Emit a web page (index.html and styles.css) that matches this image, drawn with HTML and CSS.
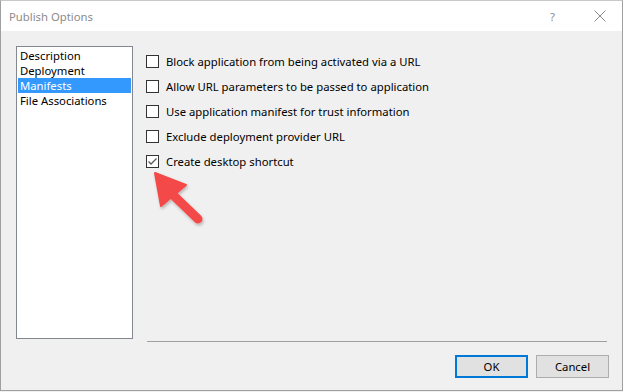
FILE: index.html
```html
<!DOCTYPE html>
<html>
<head>
<meta charset="utf-8">
<link rel="stylesheet" href="styles.css">
</head>
<body>
<div class="window">
  <div class="titlebar">
    <span class="title">Publish Options</span>
    <span class="help">?</span>
    <span class="close">
      <svg width="12" height="12" viewBox="0 0 12 12"><path d="M0.5 0.5 L11.5 11.5 M11.5 0.5 L0.5 11.5" stroke="#8a8a8a" stroke-width="1" fill="none"/></svg>
    </span>
  </div>
  <div class="content">
    <div class="main">
      <ul class="list">
        <li>Description</li>
        <li>Deployment</li>
        <li class="selected">Manifests</li>
        <li>File Associations</li>
      </ul>
      <div class="options">
        <div class="option"><span class="box"></span><span>Block application from being activated via a URL</span></div>
        <div class="option"><span class="box"></span><span>Allow URL parameters to be passed to application</span></div>
        <div class="option"><span class="box"></span><span>Use application manifest for trust information</span></div>
        <div class="option"><span class="box"></span><span>Exclude deployment provider URL</span></div>
        <div class="option"><span class="box checked"><svg width="11" height="11" viewBox="0 0 11 11"><path d="M1.5 5.5 L4 8 L9.5 2.5" stroke="#5a5a5a" stroke-width="1.3" fill="none"/></svg></span><span>Create desktop shortcut</span></div>
      </div>
    </div>
    <div class="separator"></div>
    <div class="buttons">
      <button class="btn default">OK</button>
      <button class="btn">Cancel</button>
    </div>
  </div>
  <svg class="arrow" width="60" height="60" viewBox="150 168 60 60">
    <defs>
      <filter id="sh" x="-30%" y="-30%" width="160%" height="160%">
        <feDropShadow dx="1" dy="2" stdDeviation="1.5" flood-color="#000" flood-opacity="0.25"/>
      </filter>
    </defs>
    <g filter="url(#sh)" fill="#f44848" stroke="#f44848">
      <path d="M155 173 L186 185 L161 206 Z" stroke-width="2" stroke-linejoin="round"/>
      <line x1="171" y1="193" x2="198" y2="219" stroke-width="9" stroke-linecap="round"/>
    </g>
  </svg>
</div>
</body>
</html>
```
FILE: styles.css
```css
* { box-sizing: border-box; }
html, body { margin: 0; padding: 0; }
body {
  width: 623px;
  height: 392px;
  background: #f0f0f0;
  font-family: "Noto Sans", "Liberation Sans", sans-serif;
  font-size: 11.3px;
  color: #000;
  overflow: hidden;
}
.window {
  position: relative;
  width: 623px;
  height: 391px;
  border: 1px solid #a0a0a0;
  border-top-color: #c8c8c8;
  display: flex;
  flex-direction: column;
  background: #f0f0f0;
}
.titlebar {
  height: 30px;
  background: #fff;
  display: flex;
  align-items: center;
  padding-left: 8px;
}
.title {
  color: #8c8c8c;
  flex: 1;
}
.help {
  color: #8c8c8c;
  margin-right: 39px;
}
.close {
  display: flex;
  margin-right: 16px;
}
.content {
  flex: 1;
  padding: 15px 13px 0 15px;
  display: flex;
  flex-direction: column;
}
.main {
  display: flex;
  height: 293px;
  gap: 13px;
}
.list {
  list-style: none;
  margin: 0;
  padding: 1px;
  width: 117px;
  height: 293px;
  border: 1px solid #828790;
  background: #fff;
}
.list li {
  height: 15px;
  line-height: 15px;
  padding-left: 2px;
  white-space: nowrap;
  overflow: hidden;
}
.list li.selected {
  background: #3399ff;
  color: #fff;
}
.options {
  display: flex;
  flex-direction: column;
  padding-top: 3px;
}
.option {
  height: 25px;
  display: flex;
  align-items: center;
  gap: 7px;
  white-space: nowrap;
}
.box {
  width: 13px;
  height: 13px;
  border: 1px solid #333;
  background: #fff;
  display: flex;
  align-items: center;
  justify-content: center;
  flex: none;
}
.separator {
  margin-top: 2px;
  margin-left: 131px;
  width: 460px;
  height: 1px;
  background: #a0a0a0;
}
.buttons {
  display: flex;
  justify-content: flex-end;
  gap: 8px;
  margin-top: 13px;
}
.btn {
  width: 73px;
  height: 23px;
  background: #e1e1e1;
  border: 1px solid #adadad;
  font-family: inherit;
  font-size: 11.3px;
  color: #000;
  padding: 0;
}
.btn.default {
  border: 2px solid #0078d7;
}
.arrow {
  position: absolute;
  left: 149px;
  top: 167px;
}
```
